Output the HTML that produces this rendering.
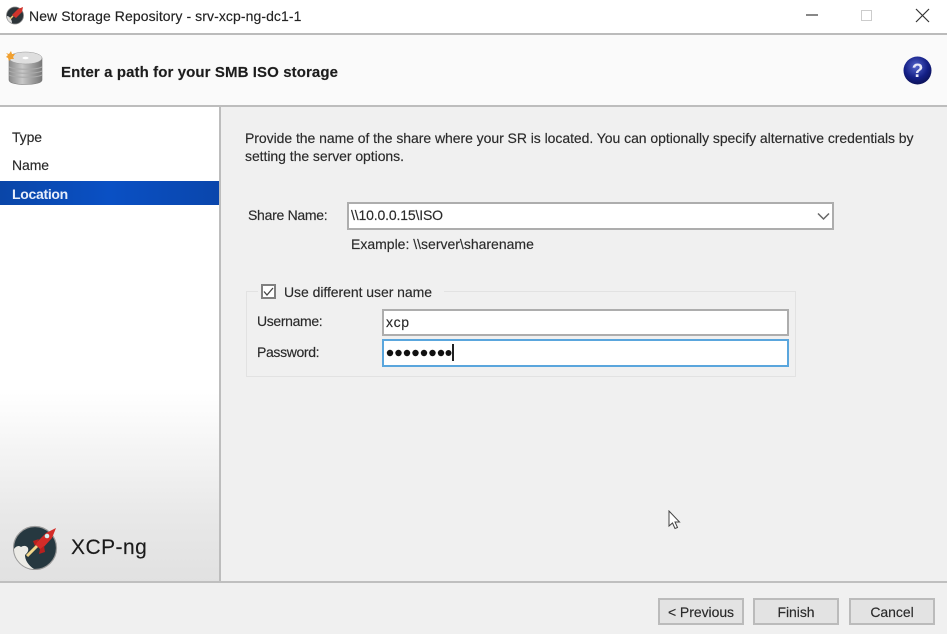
<!DOCTYPE html>
<html><head><meta charset="utf-8"><style>
html,body{margin:0;padding:0;width:947px;height:634px;overflow:hidden;background:#f0f0f0;font-family:"Liberation Sans",sans-serif;color:#222}
#w{position:absolute;left:0;top:0;width:947px;height:634px;filter:blur(.3px)}
.a{position:absolute}
.t{position:absolute;white-space:nowrap;font-size:14px;line-height:18px;color:#2a2a2a;-webkit-text-stroke:.15px #2a2a2a}
.b{position:absolute;box-sizing:border-box;background:#e3e3e3;border:2px solid #bbb;top:598px;width:86px;height:27px;text-align:center;font-size:14px;line-height:24px;color:#2a2a2a;-webkit-text-stroke:.15px #2a2a2a;letter-spacing:-.05px}
.i{position:absolute;box-sizing:border-box;background:#fff;border:2px solid #adadad}
</style></head><body><div id="w">
<div class="a" style="left:0;top:0;width:947px;height:34px;background:#fff"></div>
<div class="a" style="left:0;top:33px;width:947px;height:2px;background:#bbb"></div>
<div class="a" style="left:0;top:35px;width:947px;height:71px;background:#fafafa"></div>
<div class="a" style="left:0;top:105px;width:947px;height:2px;background:#bdbdbd"></div>
<svg class="a" style="left:5px;top:5px" width="20" height="20" viewBox="0 0 20 20"><circle cx="10" cy="10.500" r="8.500" fill="#2c3439" stroke="#888" stroke-width=".8"/><path d="M2 11c2 0 5 3 5 7-3-1-5-3-5-7z" fill="#ddd"/><path d="M7 10 13 4l5-2-1 5-6 6z" fill="#d0342c"/><path d="M5 14 8 11" stroke="#f0d080" stroke-width="1.500"/></svg>
<div class="t" style="left:29px;top:7px;letter-spacing:.08px;color:#222">New Storage Repository - srv-xcp-ng-dc1-1</div>
<div class="a" style="left:806px;top:14px;width:12px;height:2px;background:#888"></div>
<div class="a" style="left:861px;top:10px;width:11px;height:11px;box-sizing:border-box;border:1px solid #ccc"></div>
<svg class="a" style="left:915px;top:8px" width="15" height="15" viewBox="0 0 15 15"><path d="M1 1 14 14M14 1 1 14" stroke="#333" stroke-width="1.200" fill="none"/></svg>
<svg class="a" style="left:5px;top:50px" width="40" height="36" viewBox="0 0 40 36"><defs><linearGradient id="g" x1="0" x2="1"><stop offset="0" stop-color="#8b8b8b"/><stop offset=".4" stop-color="#c8c8c8"/><stop offset="1" stop-color="#777"/></linearGradient></defs><path d="M4 8v22c0 3 7 4.500 16 4.500S37 33 37 30V8z" fill="url(#g)" stroke="#777" stroke-width=".6"/><ellipse cx="20.500" cy="8" rx="16.500" ry="6" fill="#dedede" stroke="#999" stroke-width=".5"/><ellipse cx="20.500" cy="8" rx="3" ry="1.200" fill="#fff"/><path d="M4 17c6 3 27 3 33 0M4 21c6 3 27 3 33 0M4 25c6 3 27 3 33 0" stroke="#aaa" fill="none"/><path d="M1 3l3 1 2-3 1 3 3 0-2 3 1 2-3 0-2 2-1-3-2-1 2-2z" fill="#f0a030"/></svg>
<div class="t" style="left:61px;top:64px;font-size:15px;font-weight:bold;letter-spacing:.1px;color:#1c1c1c">Enter a path for your SMB ISO storage</div>
<svg class="a" style="left:903px;top:56px" width="29" height="29" viewBox="0 0 29 29"><defs><radialGradient id="h" cx=".45" cy=".35" r=".7"><stop offset="0" stop-color="#5566cc"/><stop offset=".6" stop-color="#141f86"/><stop offset="1" stop-color="#0b1050"/></radialGradient></defs><circle cx="14.500" cy="14.500" r="14" fill="url(#h)"/><text x="14.500" y="21" text-anchor="middle" font-family="Liberation Sans" font-weight="bold" font-size="19" fill="#e8e8f8">?</text></svg>

<div class="a" style="left:0;top:107px;width:219px;height:475px;background:linear-gradient(#fff 0,#fff 285px,#e8e8e8 410px,#e1e1e1 100%)"></div>
<div class="a" style="left:219px;top:107px;width:2px;height:475px;background:#bdbdbd"></div>
<div class="a" style="left:0;top:581px;width:947px;height:2px;background:#bfbfbf"></div>
<div class="t" style="left:12px;top:128px;letter-spacing:-.1px">Type</div>
<div class="t" style="left:12px;top:156px;letter-spacing:-.1px">Name</div>
<div class="a" style="left:0;top:181px;width:219px;height:24px;background:linear-gradient(90deg,#0a46a8,#0a50c4 50%,#0a46ac)"></div>
<div class="t" style="left:12px;top:185px;color:#e8eefb;-webkit-text-stroke:0;font-weight:bold;letter-spacing:-.3px">Location</div>
<svg class="a" style="left:13px;top:525px" width="45" height="45" viewBox="0 0 45 45"><circle cx="22" cy="23" r="21.500" fill="#263840" stroke="#999" stroke-width="1.200"/><path d="M1 24c2-3 5-4 7-2 3-2 6-1 7 1 1 3-1 5-3 7 0 5 3 10 9 14C10 44 1 34 1 24z" fill="#ecebe6"/><path d="M14 31 24 21" stroke="#f2d68a" stroke-width="3"/><path d="M22 19 33 8l10-5-4 10-11 12z" fill="#d42c28"/><path d="M20 16l6-2-4 7zM31 21l1 6-6 2 1-5z" fill="#b8201e"/><circle cx="34" cy="11" r="2.300" fill="#d8f0f0"/></svg>
<div class="t" style="left:71px;top:536px;font-size:21px;line-height:24px;letter-spacing:.45px;color:#1a1a1a">XCP-ng</div>

<div class="t" style="left:245px;top:129px;letter-spacing:-.05px">Provide the name of the share where your SR is located. You can optionally specify alternative credentials by</div>
<div class="t" style="left:245px;top:147px;letter-spacing:-.05px">setting the server options.</div>
<div class="t" style="left:248px;top:206px;letter-spacing:-.28px">Share Name:</div>
<div class="i" style="left:347px;top:202px;width:487px;height:28px"></div>
<div class="t" style="left:351px;top:206px;letter-spacing:-.15px">\\10.0.0.15\ISO</div>
<svg class="a" style="left:817px;top:212px" width="14" height="9" viewBox="0 0 14 9"><path d="M1 1.500 6.500 7 12 1.500" stroke="#666" stroke-width="1.500" fill="none"/></svg>
<div class="t" style="left:351px;top:235px">Example: \\server\sharename</div>
<div class="a" style="left:246px;top:291px;width:550px;height:86px;box-sizing:border-box;border:1px solid #e2e2e2"></div>
<div class="a" style="left:258px;top:282px;width:186px;height:20px;background:#f0f0f0"></div>
<div class="a" style="left:261px;top:284px;width:15px;height:15px;box-sizing:border-box;background:#fff;border:2px solid #808080"></div>
<svg class="a" style="left:261px;top:284px" width="15" height="15" viewBox="0 0 15 15"><path d="M3 7.500 6 11 12 4" stroke="#444" stroke-width="1.300" fill="none"/></svg>
<div class="t" style="left:284px;top:283px;letter-spacing:-.05px">Use different user name</div>
<div class="t" style="left:257px;top:312px;letter-spacing:-.35px">Username:</div>
<div class="i" style="left:382px;top:309px;width:407px;height:27px"></div>
<div class="t" style="left:386px;top:313px;letter-spacing:.6px">xcp</div>
<div class="t" style="left:257px;top:343px;letter-spacing:-.35px">Password:</div>
<div class="i" style="left:382px;top:339px;width:407px;height:28px;border-color:#5aa6dd"></div>
<svg class="a" style="left:386px;top:347px" width="70" height="12" viewBox="0 0 70 12"><g fill="#111"><circle cx="4" cy="6" r="3.200"/><circle cx="12.500" cy="6" r="3.200"/><circle cx="21" cy="6" r="3.200"/><circle cx="29.500" cy="6" r="3.200"/><circle cx="38" cy="6" r="3.200"/><circle cx="46.500" cy="6" r="3.200"/><circle cx="55" cy="6" r="3.200"/><circle cx="62.500" cy="6" r="3"/></g></svg>
<div class="a" style="left:452px;top:344px;width:2px;height:17px;background:#222"></div>
<svg class="a" style="left:668px;top:510px" width="13" height="20" viewBox="0 0 13 20"><path d="M1 1v15l3.500-3 2.500 5.500 2.500-1-2.500-5.500H11.500z" fill="#fff" stroke="#444" stroke-width="1"/></svg>
<div class="b" style="left:658px">&lt; Previous</div>
<div class="b" style="left:753px">Finish</div>
<div class="b" style="left:849px">Cancel</div>
</div></body></html>
